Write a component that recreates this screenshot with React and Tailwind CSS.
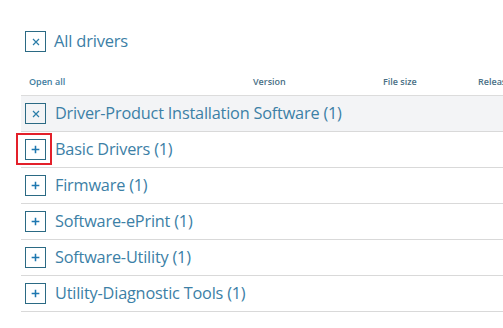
import React from 'react';

const categories = [
  { name: 'Driver-Product Installation Software (1)', open: true },
  { name: 'Basic Drivers (1)', focused: true },
  { name: 'Firmware (1)' },
  { name: 'Software-ePrint (1)' },
  { name: 'Software-Utility (1)' },
  { name: 'Utility-Diagnostic Tools (1)' },
];

function IconX({ className }) {
  return (
    <svg viewBox="0 0 10 10" className={className} fill="none" stroke="currentColor" strokeWidth="1.2">
      <path d="M2 2 L8 8 M8 2 L2 8" />
    </svg>
  );
}

function IconPlus({ className }) {
  return (
    <svg viewBox="0 0 10 10" className={className} fill="none" stroke="currentColor" strokeWidth="1.4">
      <path d="M5 1.5 V8.5 M1.5 5 H8.5" />
    </svg>
  );
}

function ToggleBox({ open, focused }) {
  return (
    <span className="relative w-[21px] h-[21px] border border-[#2b6a84] flex items-center justify-center text-[#1d77b0] shrink-0">
      {open ? <IconX className="w-[10px] h-[10px] text-[#2b7da8]" /> : <IconPlus className="w-[11px] h-[11px]" />}
      {focused && (
        <span className="absolute -left-[10px] -right-[7px] -top-[7px] -bottom-[6px] border-2 border-[#e3202a]" />
      )}
    </span>
  );
}

function App() {
  return (
    <div className="w-[503px] h-[328px] bg-white overflow-hidden font-['Open_Sans',sans-serif]">
      <div className="pl-[21px]">
        <div className="flex items-center gap-[8px] pl-[4px] pt-[31px] h-[52px]">
          <ToggleBox open />
          <span className="text-[16.5px] text-[#3c80a6] leading-none tracking-[-0.2px]">All drivers</span>
        </div>

        <div className="flex items-center h-[44px] pt-[16px] border-b border-[#dcdcdc] text-[9px] font-semibold text-[#4a6f85] whitespace-nowrap">
          <span className="pl-[8px] w-[232px] shrink-0 text-[#3f7da0]">Open all</span>
          <span className="w-[130px] shrink-0">Version</span>
          <span className="w-[95px] shrink-0">File size</span>
          <span className="shrink-0">Release date</span>
        </div>

        {categories.map((c) => (
          <div
            key={c.name}
            className={`flex items-center h-[36px] border-b border-[#d9d9d9] pl-[4px] gap-[9px] ${c.open ? 'bg-[#f3f4f6]' : 'bg-white'}`}
          >
            <ToggleBox open={c.open} focused={c.focused} />
            <span className="text-[16.3px] text-[#3c80a6] whitespace-nowrap tracking-[-0.2px]">{c.name}</span>
          </div>
        ))}
      </div>
    </div>
  );
}

export default App;
